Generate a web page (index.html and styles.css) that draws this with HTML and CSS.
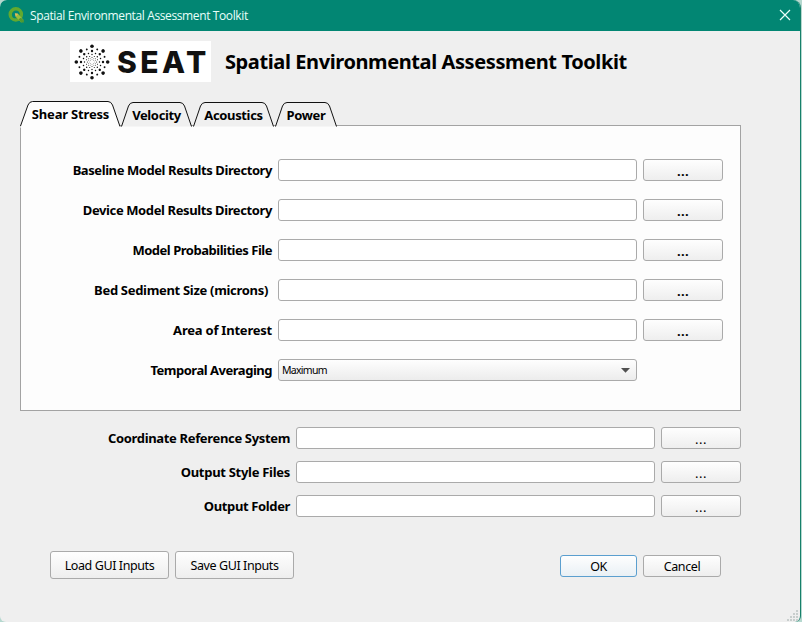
FILE: index.html
```html
<!DOCTYPE html>
<html lang="en">
<head>
<meta charset="utf-8">
<title>Spatial Environmental Assessment Toolkit</title>
<link rel="stylesheet" href="styles.css">
</head>
<body>
<div class="window">
  <header class="titlebar">
    <svg class="app-icon" width="17" height="17" viewBox="0 0 17 17">
      <circle cx="7.800" cy="7.400" r="5.600" fill="none" stroke="#62a92f" stroke-width="3.400"/>
      <path d="M7 6.400l3 .4 5.600 6.200-2.400 2.400L7.600 9.800z" fill="#9bbd3c"/>
      <path d="M6.800 6.200l3.400.5-2.400 2.700z" fill="#e9b45d"/>
      <path d="M10.500 12.300l2.500 3.200h2.800v-2.300l-3-2.400z" fill="#4f9a31"/>
    </svg>
    <span class="caption">Spatial Environmental Assessment Toolkit</span>
    <svg class="close" width="12" height="12" viewBox="0 0 12 12"><path d="M1 1l10 10M11 1L1 11" stroke="#e9fffa" stroke-width="1.200"/></svg>
  </header>

  <div class="brand">
    <div class="logo">
      <svg class="burst" width="36" height="36" viewBox="-18 -18 36 36">
        <defs>
          <g id="ray">
            <circle cy="-15.700" r="1.800"/>
            <circle cy="-11" r="1.200"/>
            <circle cy="-7.500" r=".7"/>
            <circle cy="-4.600" r=".5"/>
            <circle cy="-2.300" r=".35"/>
            <g transform="rotate(22.500)">
              <circle cy="-13.600" r=".95"/>
              <circle cy="-9.200" r=".75"/>
              <circle cy="-6" r=".5"/>
              <circle cy="-3.500" r=".35"/>
            </g>
          </g>
        </defs>
        <g fill="#111">
          <use href="#ray"/><use href="#ray" transform="rotate(45)"/>
          <use href="#ray" transform="rotate(90)"/><use href="#ray" transform="rotate(135)"/>
          <use href="#ray" transform="rotate(180)"/><use href="#ray" transform="rotate(225)"/>
          <use href="#ray" transform="rotate(270)"/><use href="#ray" transform="rotate(315)"/>
        </g>
      </svg>
      <span class="wordmark">SEAT</span>
    </div>
    <h1>Spatial Environmental Assessment Toolkit</h1>
  </div>

  <nav class="tabs">
    <div class="tab active"><svg width="101" height="27" viewBox="0 0 101 27"><path d="M.5 27V25L8 4Q9.500.5 12.500.5H88Q91 .5 92.500 4L100 25.500V27z" fill="#fdfdfd"/><path d="M.5 25L8 4Q9.500.5 12.500.5H88Q91 .5 92.500 4L100 25.500" fill="none" stroke="#111"/></svg><span>Shear Stress</span></div>
    <div class="tab velocity"><svg width="71" height="26" viewBox="0 0 71 26"><path d="M.5 24.500L7.500 4Q9 .5 12 .5H59Q62 .5 63.500 4L70.500 24.500" fill="#f0f0f0" stroke="#111"/></svg><span>Velocity</span></div>
    <div class="tab acoustics"><svg width="81" height="26" viewBox="0 0 81 26"><path d="M.5 24.500L7.500 4Q9 .5 12 .5H69Q72 .5 73.500 4L80.500 24.500" fill="#f0f0f0" stroke="#111"/></svg><span>Acoustics</span></div>
    <div class="tab power"><svg width="62" height="26" viewBox="0 0 62 26"><path d="M.5 24.500L7.500 4Q9 .5 12 .5H50Q53 .5 54.500 4L61.500 24.500" fill="#f0f0f0" stroke="#111"/></svg><span>Power</span></div>
  </nav>

  <section class="panel">
    <div class="row"><label class="l1">Baseline Model Results Directory</label><div class="field"></div><button class="browse">...</button></div>
    <div class="row"><label class="l2">Device Model Results Directory</label><div class="field"></div><button class="browse">...</button></div>
    <div class="row"><label class="l3">Model Probabilities File</label><div class="field"></div><button class="browse">...</button></div>
    <div class="row"><label class="l4">Bed Sediment Size (microns)</label><div class="field"></div><button class="browse">...</button></div>
    <div class="row"><label class="l5">Area of Interest</label><div class="field"></div><button class="browse">...</button></div>
    <div class="row"><label class="l6">Temporal Averaging</label><div class="field select"><span>Maximum</span><svg width="9" height="5" viewBox="0 0 9 5"><path d="M0 0h9L4.500 4.700z" fill="#505050"/></svg></div></div>
  </section>

  <section class="output">
    <div class="row"><label class="l7">Coordinate Reference System</label><div class="field"></div><button class="browse">...</button></div>
    <div class="row"><label class="l8">Output Style Files</label><div class="field"></div><button class="browse">...</button></div>
    <div class="row"><label class="l9">Output Folder</label><div class="field"></div><button class="browse">...</button></div>
  </section>

  <footer class="actions">
    <button class="load">Load GUI Inputs</button>
    <button class="save">Save GUI Inputs</button>
    <button class="ok">OK</button>
    <button class="cancel">Cancel</button>
  </footer>
  <svg class="grip" width="12" height="12" viewBox="0 0 12 12"><path d="M9 1h2M6 4h2M9 4h2M3 7h2M6 7h2M9 7h2M0 10h2M3 10h2M6 10h2M9 10h2" stroke="#bcc4c2" stroke-width="1.500"/></svg>
</div>
</body>
</html>
```
FILE: styles.css
```css
* { box-sizing: border-box; }
body {
  margin: 0;
  width: 802px;
  height: 622px;
  overflow: hidden;
  background: #b5d8cf;
  font-family: "Noto Sans", sans-serif;
  color: #000;
}
.window {
  position: relative;
  width: 801px;
  height: 622px;
  background: #efefef;
  border-right: 1px solid #16806a;
  border-radius: 7px 8px 6px 6px;
  overflow: hidden;
}
.titlebar {
  display: flex;
  align-items: center;
  height: 31px;
  padding: 0 9px 0 8px;
  background: #028673;
}
.app-icon { flex: none; margin-right: 5px; }
.caption {
  flex: 1;
  font: 12px/16px "Open Sans", sans-serif;
  letter-spacing: -.38px;
  color: #e9fffa;
  white-space: nowrap;
}
.close { margin-top: -2px; }
.brand { display: flex; height: 70px; padding: 10px 0 0 70px; }
.logo {
  display: flex;
  align-items: center;
  width: 141px;
  height: 41px;
  padding-left: 4px;
  background: #fff;
}
.wordmark {
  margin: 2px 0 0 7px;
  font: 800 30px/41px Inter, sans-serif;
  letter-spacing: 3.5px;
  color: #111;
}
h1 {
  margin: 0 0 0 14px;
  font-size: 20px;
  line-height: 42px;
  font-weight: bold;
  letter-spacing: -.4px;
  white-space: nowrap;
}
.tabs { display: flex; align-items: flex-end; height: 26px; padding-left: 20px; }
.tab { display: grid; height: 25px; }
.tab.active { z-index: 1; margin-bottom: -1px; height: 27px; }
.tab svg, .tab span { grid-area: 1 / 1; }
.tab span {
  font-size: 13px;
  line-height: 27px;
  font-weight: bold;
  letter-spacing: -.36px;
  text-align: center;
  white-space: nowrap;
}
.tab.active span { letter-spacing: -.18px; }
.tab.acoustics, .tab.power { margin-left: 1px; }
.panel {
  width: 721px;
  height: 286px;
  margin: -2px 0 0 20px;
  padding-top: 33px;
  background: #fdfdfd;
  border: 1px solid #a3a3a3;
}
.row { display: flex; height: 22px; margin-bottom: 18px; }
.row label {
  width: 251px;
  margin-right: 6px;
  font-size: 13px;
  line-height: 22px;
  font-weight: bold;
  text-align: right;
  white-space: nowrap;
}
.row .l1 { letter-spacing: -.42px; }
.row .l2 { letter-spacing: -.39px; }
.row .l3 { letter-spacing: -.48px; }
.row .l4 { letter-spacing: -.31px; padding-right: 4px; }
.row .l5 { letter-spacing: -.22px; }
.row .l6 { letter-spacing: -.48px; }
.row .l7 { letter-spacing: -.34px; }
.row .l8 { letter-spacing: -.29px; }
.row .l9 { letter-spacing: -.37px; }
.field {
  width: 359px;
  height: 22px;
  margin-right: 6px;
  background: #fff;
  border: 1px solid #aaa;
  border-radius: 3px;
}
button {
  padding: 0;
  border: 1px solid #aaa;
  border-radius: 3px;
  background: linear-gradient(#fefefe, #eee);
  font-family: inherit;
  font-size: 12.5px;
  letter-spacing: -.4px;
  color: #000;
}
.browse { width: 80px; height: 22px; padding-top: 2px; font-size: 13px; line-height: 18px; font-weight: bold; letter-spacing: .3px; }
.output .browse { font-weight: normal; letter-spacing: .5px; }
.select {
  display: flex;
  align-items: center;
  justify-content: space-between;
  padding: 0 6px 0 3px;
  background: linear-gradient(#fefefe, #ececec);
  font-size: 10.5px;
  letter-spacing: -.72px;
}
.output { padding: 16px 0 0 20px; }
.output .row { margin-bottom: 12px; }
.output label { width: 270px; }
.actions { display: flex; padding: 22px 0 0 50px; }
.load, .save { width: 119px; height: 28px; margin-right: 6px; }
.ok { width: 77px; height: 22px; margin: 4px 6px 0 260px; border-color: #5b9fcf; background: linear-gradient(#fefefe, #e9f0f5); }
.cancel { width: 78px; height: 22px; margin-top: 4px; }
.grip { position: absolute; right: 1px; bottom: 0; }
```
